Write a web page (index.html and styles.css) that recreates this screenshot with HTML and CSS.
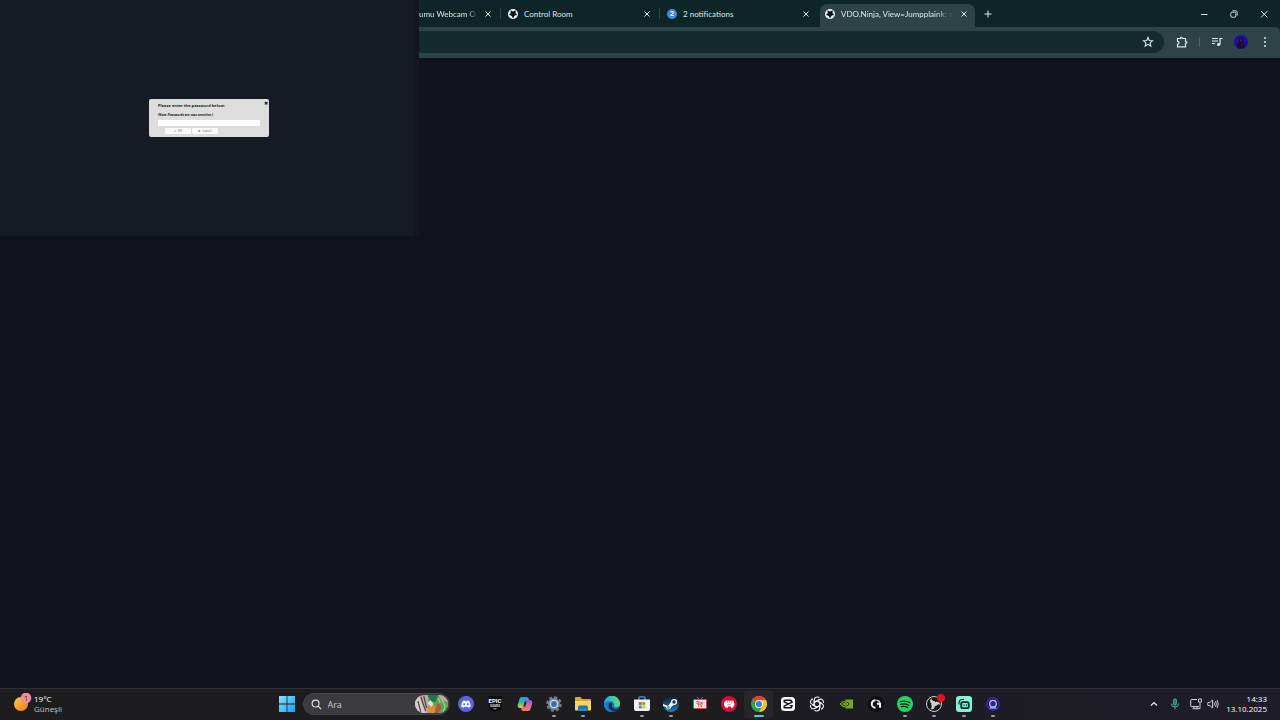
FILE: index.html
```html
<!DOCTYPE html>
<html lang="tr">
<head>
  <meta charset="UTF-8" />
  <meta name="viewport" content="width=device-width, initial-scale=1" />
  <title>VDO.Ninja, View=Jumpplaink</title>
  <link rel="stylesheet" href="styles.css">
</head>
<body>
  <svg class="sprite" aria-hidden="true">
    <symbol id="i-close" viewBox="0 0 10 10">
      <path d="M2.5 2.5l5 5M7.5 2.5l-5 5" stroke="currentColor" fill="none" />
    </symbol>
    <symbol id="i-ninja" viewBox="0 0 20 20">
      <circle cx="10" cy="10" r="10" fill="#f2f5f5" />
      <path d="M5 2.500L10 5 15.500 2.500 15 8 18.500 12 13.500 13 10 18.500 7.500 14 2 11.500 5.500 8z" fill="#0a1212" />
    </symbol>
  </svg>

  <!-- Ventana del navegador -->
  <header class="browser">
    <div class="tabs">
      <div class="tab tab-cut">
        <span class="tab-title">umu Webcam O</span>
        <button class="tab-close" aria-label="Kapat"><svg><use href="#i-close" /></svg></button>
      </div>
      <div class="tab">
        <svg class="favicon"><use href="#i-ninja" /></svg>
        <span class="tab-title">Control Room</span>
        <button class="tab-close" aria-label="Kapat"><svg><use href="#i-close" /></svg></button>
      </div>
      <div class="tab no-line">
        <span class="favicon badge-2">2</span>
        <span class="tab-title">2 notifications</span>
        <button class="tab-close" aria-label="Kapat"><svg><use href="#i-close" /></svg></button>
      </div>
      <div class="tab active">
        <svg class="favicon"><use href="#i-ninja" /></svg>
        <span class="tab-title">VDO.Ninja, View=Jumpplaink: a</span>
        <button class="tab-close" aria-label="Kapat"><svg><use href="#i-close" /></svg></button>
      </div>
      <button class="new-tab" aria-label="Yeni sekme">
        <svg viewBox="0 0 10 10"><path d="M5 1.500v7M1.500 5h7" stroke="currentColor" fill="none" /></svg>
      </button>
      <div class="window-controls">
        <button aria-label="Simge durumuna küçült">
          <svg viewBox="0 0 10 10"><path d="M2 5.500h6.500" stroke="currentColor" fill="none" /></svg>
        </button>
        <button aria-label="Önceki boyut">
          <svg viewBox="0 0 10 10"><g stroke="currentColor" stroke-width=".9" fill="none"><rect x="1.800" y="3.200" width="5" height="5" rx="1.200" /><path d="M3.500 1.800h3.200q1.500 0 1.500 1.500v3.200" /></g></svg>
        </button>
        <button aria-label="Kapat">
          <svg viewBox="0 0 10 10"><path d="M2 2l6.500 6.500M8.500 2L2 8.500" stroke="currentColor" fill="none" /></svg>
        </button>
      </div>
    </div>

    <div class="toolbar">
      <div class="address">
        <button class="star" aria-label="Yer işareti ekle">
          <svg viewBox="0 0 12 12"><path d="M6 1.500l1.300 3 3.200.3-2.400 2.100.7 3.200L6 8.400l-2.800 1.700.7-3.200L1.500 4.800l3.200-.3z" stroke="currentColor" stroke-width="1.100" fill="none" /></svg>
        </button>
      </div>
      <button class="extensions" aria-label="Uzantılar">
        <svg viewBox="0 0 12 12"><path d="M1.500 2.500h3c-.2-1.600 2-1.600 1.800 0h3.200v3c1.800-.2 1.800 2.100 0 1.900v3.400h-8V8.300c2-.3 2-2.800 0-3z" stroke="currentColor" stroke-width="1.200" fill="none" /></svg>
      </button>
      <span class="divider"></span>
      <button class="media" aria-label="Medya">
        <svg viewBox="0 0 12 12"><path d="M1 2.500h6M1 5h6M1 7.500h3M9 8.500V2.500h2.500" stroke="currentColor" stroke-width="1.200" fill="none" /><circle cx="7.600" cy="8.500" r="1.600" fill="currentColor" /></svg>
      </button>
      <button class="profile" aria-label="Profil">
        <svg viewBox="0 0 14 14"><circle cx="7" cy="7" r="7" fill="#1b0f9c" /><path d="M7 2.500c2 0 2.500 2.500 1.800 4l2 3.500-1.500 3.500H4.500L3.200 10.500l2-4C4.500 4.500 5 2.500 7 2.500z" fill="#170c26" /><path d="M6 4.500h2v2H6zM7.500 8l1.300 2-1.800 1z" fill="#56203a" /></svg>
      </button>
      <button class="menu" aria-label="Menü">
        <svg viewBox="0 0 12 12" fill="currentColor"><circle cx="6" cy="2" r="1" /><circle cx="6" cy="6" r="1" /><circle cx="6" cy="10" r="1" /></svg>
      </button>
    </div>
  </header>

  <main class="page"></main>

  <!-- Vista previa con el aviso de contraseña -->
  <section class="preview">
    <form class="prompt">
      <button type="button" class="prompt-close" aria-label="Close">✖</button>
      <label class="prompt-title" for="password">Please enter the password below:</label>
      <p class="prompt-note">(Note: Passwords are case sensitive.)</p>
      <input id="password" type="password">
      <div class="prompt-actions">
        <button type="button"><span class="ok">✔</span> OK</button>
        <button type="button"><span class="cancel">✖</span> Cancel</button>
      </div>
    </form>
  </section>

  <!-- Barra de tareas -->
  <footer class="taskbar">
    <div class="weather">
      <svg class="weather-icon" viewBox="0 0 18 18">
        <defs><linearGradient id="sun" x1="0" y1="0" x2="1" y2="1"><stop offset="0" stop-color="#ffc84a" /><stop offset="1" stop-color="#ee7a1c" /></linearGradient></defs>
        <circle cx="7" cy="11" r="7" fill="url(#sun)" />
        <circle cx="12" cy="5" r="5.300" fill="#f08b9c" />
        <text x="12" y="8" text-anchor="middle">1</text>
      </svg>
      <div class="weather-text">
        <span class="temp">19°C</span>
        <span>Güneşli</span>
      </div>
    </div>

    <div class="center">
      <button class="start" aria-label="Başlat">
        <svg viewBox="0 0 16 16">
          <defs><linearGradient id="win" x1="0" y1="0" x2="1" y2="1"><stop offset="0" stop-color="#8be0fa" /><stop offset="1" stop-color="#18a4ee" /></linearGradient></defs>
          <path d="M0 0h7.600v7.600H0zM8.400 0H16v7.600H8.400zM0 8.400h7.600V16H0zM8.400 8.400H16V16H8.400z" fill="url(#win)" />
        </svg>
      </button>
      <div class="search">
        <svg class="lens" viewBox="0 0 12 12"><circle cx="5" cy="5" r="3.800" stroke="#e3e3e5" stroke-width="1.200" fill="none" /><path d="M7.800 7.800L11 11" stroke="#e3e3e5" stroke-width="1.300" /></svg>
        <input type="text" placeholder="Ara" aria-label="Ara">
        <svg class="art" viewBox="0 0 34 18" preserveAspectRatio="none">
          <defs><clipPath id="artclip"><rect width="34" height="18" rx="9" /></clipPath></defs>
          <g clip-path="url(#artclip)">
            <rect width="34" height="18" fill="#b8a9a4" />
            <path d="M4 0l7 18H0V5z" fill="#d9cbc9" />
            <path d="M6 2l5 14M9 1l3 12M3 6l3 11" stroke="#574b51" stroke-width="1.300" />
            <path d="M13 0h21v18H22l-3-8-5-3z" fill="#5ca35d" />
            <path d="M13 0h11l-3 7-5-1z" fill="#286f4d" />
            <path d="M24 0h10v7l-7-2z" fill="#c8a4a5" />
            <path d="M17 8l4 3-1 7h-6l-1-6z" fill="#e08a3c" />
            <path d="M13 8l3-3 3 4-2 3z" fill="#d9e3d0" />
            <path d="M23 8l3 1 1 5-4 4h-3l2-6z" fill="#bc5439" />
            <path d="M28 5l3 6-2 6M24 3l2 5" stroke="#9bd77b" stroke-width="1.200" fill="none" />
          </g>
        </svg>
      </div>

      <nav class="apps">
        <button aria-label="Discord">
          <svg viewBox="0 0 16 16"><circle cx="8" cy="8" r="8" fill="#5865e8" /><path d="M3.300 10.800c0-2.500.6-4.300 1.500-5.800l2-.6.5.8h1.400l.5-.8 2 .6c.9 1.500 1.500 3.300 1.500 5.800l-2.300 1-.7-1H6.300l-.7 1z" fill="#fff" /><circle cx="6.200" cy="8.300" r="1" fill="#5865e8" /><circle cx="9.800" cy="8.300" r="1" fill="#5865e8" /></svg>
        </button>
        <button aria-label="Epic Games">
          <svg viewBox="0 0 16 16"><path d="M1.500 0h13v13L8 16l-6.500-3z" fill="#0b0b0c" /><text class="epic" x="8" y="7" text-anchor="middle">EPIC</text><text class="games" x="8" y="10.500" text-anchor="middle">GAMES</text><path d="M5.500 12.500h5L8 13.600z" fill="#ddd" /></svg>
        </button>
        <button aria-label="Copilot">
          <svg viewBox="0 0 16 16">
            <defs>
              <linearGradient id="cop1" x1="0" y1="0" x2="0" y2="1"><stop offset="0" stop-color="#2d8df0" /><stop offset=".5" stop-color="#43b99a" /><stop offset="1" stop-color="#f2c33a" /></linearGradient>
              <linearGradient id="cop2" x1="0" y1="0" x2="0" y2="1"><stop offset="0" stop-color="#7b62ef" /><stop offset=".5" stop-color="#e460ab" /><stop offset="1" stop-color="#f3834c" /></linearGradient>
            </defs>
            <path d="M4.500 1h5.300q1.400 0 1.800 1.500l.5 1.800H10L7.500 12H3.300Q.2 12 .8 8.500L2.500 3Q3 1 4.500 1z" fill="url(#cop1)" />
            <path d="M11.500 15H6.200q-1.400 0-1.800-1.500L4 11.700h2L8.500 4h4.200q3.100 0 2.500 3.500L13.500 13q-.5 2-2 2z" fill="url(#cop2)" />
            <path d="M7.600 5.500h1.900L8.400 10.500H6.300z" fill="#26222f" />
          </svg>
        </button>
        <button class="running" aria-label="Ayarlar">
          <svg viewBox="0 0 16 16"><circle cx="8" cy="8" r="6.700" fill="none" stroke="#767b84" stroke-width="2.200" stroke-dasharray="3.200 2.060" /><circle cx="8" cy="8" r="4.900" fill="#888d96" stroke="#858a93" stroke-width="2" /><circle cx="8" cy="8" r="4" fill="#d5dde6" /><circle cx="8" cy="8" r="2.900" fill="#2b72bd" /></svg>
        </button>
        <button class="running" aria-label="Dosya Gezgini">
          <svg viewBox="0 0 16 16"><path d="M0 2q0-1 1-1h4.500L7 3h8q1 0 1 1v10H0z" fill="#e0a52b" /><path d="M0 5h16v8.500q0 1-1 1H1q-1 0-1-1z" fill="#fbd366" /><path d="M3 15v-4q0-1.500 1.500-1.500h7q1.500 0 1.500 1.500v4h-2.500v-2h-5v2z" fill="#1a78bd" /><path d="M5.500 13h5v2h-5z" fill="#2a91d1" /></svg>
        </button>
        <button aria-label="Edge">
          <svg viewBox="0 0 16 16">
            <defs><linearGradient id="edge" x1="0" y1="0" x2="1" y2="0"><stop offset="0" stop-color="#26a5e6" /><stop offset="1" stop-color="#5be06a" /></linearGradient></defs>
            <circle cx="8" cy="8" r="8" fill="#126ac0" />
            <path d="M0 8a8 8 0 0 1 16-.5c.2 3-2.600 4.300-5 3.700-1.600-.4-1.400-1.200-1-2C10.600 7.300 9 5.200 6 5.200 3 5.200 1 6 0 8z" fill="url(#edge)" />
            <path d="M5.400 7.500c-2 3.300.6 7.300 4.700 7.300 2 0 3.700-.8 4.700-2.100C11 14.500 7 12 8 8.700 8 7 6.500 6.500 5.400 7.500z" fill="#1c2838" />
            <path d="M6.500 5.300C2 6.300 2.500 13 7.500 16 3 16 0 12.500 0 8c1.500-3 4-3 6.500-2.700z" fill="#1c7fd0" />
          </svg>
        </button>
        <button class="running" aria-label="Microsoft Store">
          <svg viewBox="0 0 16 16"><path d="M5 4V1.800q0-1 1-1h4q1 0 1 1V4" stroke="#37a3e0" stroke-width="1.300" fill="none" /><path d="M0 3.500h16V13q0 2-2 2H2q-2 0-2-2z" fill="#f1f2f4" /><path d="M4.800 6h2.900v2.900H4.800z" fill="#e8512f" /><path d="M8.300 6h2.900v2.900H8.300z" fill="#76b52c" /><path d="M4.800 9.500h2.900v2.900H4.800z" fill="#2196d9" /><path d="M8.300 9.500h2.900v2.900H8.300z" fill="#f5b921" /></svg>
        </button>
        <button class="running" aria-label="Steam">
          <svg viewBox="0 0 16 16">
            <defs><linearGradient id="steam" x1="0" y1="0" x2="0" y2="1"><stop offset="0" stop-color="#131b34" /><stop offset="1" stop-color="#1a7db8" /></linearGradient></defs>
            <circle cx="8" cy="8" r="8" fill="url(#steam)" /><path d="M0 8l5 2L8 6l2-3 4 1-1 4-4 2-2 3-3 .500-1-2.500-3-1z" fill="#f0f3f6" /><circle cx="11" cy="6" r="3" fill="#f0f3f6" /><circle cx="11" cy="6" r="1.700" fill="#202b46" /><circle cx="5.400" cy="11.600" r="1.500" fill="#7f96ab" />
          </svg>
        </button>
        <button aria-label="Dizi">
          <svg viewBox="0 0 16 16"><path d="M5 1l3 3 3-3" stroke="#c75149" fill="none" /><rect x="1.500" y="3.500" width="13" height="9" rx="1" fill="#f3e9e4" stroke="#cf4a41" /><text class="tv" x="8" y="8" text-anchor="middle">Dizi</text><text class="tv" x="8" y="11.400" text-anchor="middle">TV</text></svg>
        </button>
        <button aria-label="Bigo">
          <svg viewBox="0 0 16 16"><circle cx="8" cy="8" r="8" fill="#d80c30" /><path d="M3 6.500L5 4.500l7.500.3 1 3.700-1.500 3-2 .5-.5-1.500H7V12l-2.500-.5L3 9z" fill="#fff" /><path d="M6.500 4.500v2.500M8.700 4.500v2.500M10.800 5v2.500M6 8.300h4" stroke="#d80c30" stroke-width=".5" /></svg>
        </button>
        <button class="running current" aria-label="Chrome">
          <svg viewBox="0 0 16 16"><circle cx="8" cy="8" r="8" fill="#2da44e" /><path d="M8 8L1.100 4A8 8 0 0 1 14.900 4z" fill="#e5412f" /><path d="M8 4h6.900A8 8 0 0 1 8 16l3.500-6z" fill="#fbc417" /><circle cx="8" cy="8" r="4" fill="#fff" /><circle cx="8" cy="8" r="3.100" fill="#3a7fe8" /></svg>
        </button>
        <button aria-label="CapCut">
          <svg viewBox="0 0 16 16"><rect x="1" y="1" width="14" height="14" rx="3.500" fill="#fafafa" /><path d="M11.500 6V5q0-.8-.8-.8H5q-.9 0-.9.800v.8l8.700 4.300M11.500 10v1q0 .8-.8.800H5q-.9 0-.9-.8v-.8l8.700-4.300" stroke="#111" stroke-width="1.500" fill="none" /></svg>
        </button>
        <button aria-label="ChatGPT">
          <svg viewBox="0 0 16 16">
            <g stroke="#ececef" stroke-width="1.100" fill="none">
              <path id="petal" d="M5.300 9.500V4q0-3 2.900-3 1.400 0 2.200.9M5.300 6.200l4.800-2.800" />
              <use href="#petal" transform="rotate(60 8 8)" />
              <use href="#petal" transform="rotate(120 8 8)" />
              <use href="#petal" transform="rotate(180 8 8)" />
              <use href="#petal" transform="rotate(240 8 8)" />
              <use href="#petal" transform="rotate(300 8 8)" />
            </g>
          </svg>
        </button>
        <button aria-label="NVIDIA">
          <svg viewBox="0 0 16 16"><path d="M6.500 3.500H14v9H6.500z" fill="#76a81c" /><path d="M1.500 8q5-6 10 0-5 6-10 0z" fill="#1c2310" stroke="#76a81c" stroke-width="1.200" /><path d="M4 8q2.500-3 5 0-2.500 2.800-5 0z" stroke="#8fc527" fill="#587f14" /></svg>
        </button>
        <button aria-label="Logitech G HUB">
          <svg viewBox="0 0 16 16"><circle cx="8" cy="8" r="8" fill="#0d0d10" /><path d="M7.500 4.200a3.700 3.700 0 0 0 0 7.500M9 7.800h3.100v4" stroke="#f6f6f6" stroke-width="2" fill="none" /><path d="M8.500 4.200q2.900.3 3.600 2.500" stroke="#f6f6f6" stroke-width="1.300" fill="none" /></svg>
        </button>
        <button class="running" aria-label="Spotify">
          <svg viewBox="0 0 16 16"><circle cx="8" cy="8" r="8" fill="#1ed760" /><path d="M3.300 5.700q5-1.500 9.500 1M3.700 8.300q4.200-1.200 8 .9M4.200 10.700q3.600-.9 6.600.8" stroke="#121a16" stroke-width="1.300" stroke-linecap="round" fill="none" /></svg>
        </button>
        <button class="running" aria-label="OBS Studio">
          <svg viewBox="0 0 16 16"><circle cx="8" cy="8" r="7.500" fill="#171619" stroke="#d0d0d3" /><g fill="#cfced2"><path id="blade" d="M8 8.500C4 8 3 4.500 5.500 2c-.2 2 1 3 3.500 3.200q1 2-1 3.300z" /><use href="#blade" transform="rotate(120 8 8)" /><use href="#blade" transform="rotate(240 8 8)" /></g></svg>
          <span class="rec-dot"></span>
        </button>
        <button class="running" aria-label="Streamlabs">
          <svg viewBox="0 0 16 16"><rect width="16" height="16" rx="3" fill="#80f5d2" /><rect x="5.200" y="6.200" width="7.600" height="6" rx="1.800" fill="#80f5d2" stroke="#0d2a2a" stroke-width="1.800" /><path d="M3 8.500V7q0-3.500 3.500-3.500H8" stroke="#0d2a2a" stroke-width="1.200" fill="none" /><path d="M8 8.300v1.700M10.500 8.300v1.700" stroke="#0d2a2a" /></svg>
        </button>
        <button class="running" aria-label="Kamera">
          <svg viewBox="0 0 16 16"><circle cx="8" cy="8" r="7" fill="#3524ad" /><circle cx="8" cy="8" r="5.200" fill="#191747" /><circle cx="8" cy="7.700" r="3.300" stroke="#b9c8f4" stroke-width="1.300" fill="#292775" /><path d="M4.500 12h7" stroke="#b9c8f4" stroke-width="1.200" /></svg>
        </button>
      </nav>
    </div>

    <div class="tray">
      <button aria-label="Gizli simgeler"><svg viewBox="0 0 12 12"><path d="M3 7.500l3-3 3 3" stroke="#eee" stroke-width="1.200" fill="none" /></svg></button>
      <button aria-label="Mikrofon"><svg viewBox="0 0 12 12"><rect x="4.500" y=".8" width="3" height="6.400" rx="1.500" fill="#277c70" stroke="#3fb8a4" stroke-width=".8" /><path d="M2.300 5.500q.2 3.500 3.700 3.500t3.700-3.500M6 9v2.300" stroke="#3fb8a4" fill="none" /></svg></button>
      <button class="network" aria-label="Ağ"><svg viewBox="0 0 12 12"><path d="M7 1.500H1.500q-.8 0-.8.800v5.500q0 .8.800.8H9M4 8.600v2M2.500 10.700h6M7 8.600v2" stroke="#d7d7dc" fill="none" /><path d="M8.500 1h3v3h-3zM10 4v6.600H8" stroke="#d7d7dc" stroke-width=".9" fill="none" /></svg></button>
      <button aria-label="Ses"><svg viewBox="0 0 12 12"><path d="M.8 4.500h2L5.500 2v8L2.800 7.500h-2zM7 4.500q1 1.500 0 3M8.500 3.200q2 2.800 0 5.600M10 2q2.800 4 0 8" stroke="#d7d7dc" stroke-width=".9" fill="none" /></svg></button>
      <div class="clock">
        <span>14:33</span>
        <span>13.10.2025</span>
      </div>
    </div>
  </footer>
</body>
</html>
```
FILE: styles.css
```css
* {
  box-sizing: border-box;
}

body {
  margin: 0;
  min-height: 100vh;
  display: flex;
  flex-direction: column;
  position: relative;
  background: #10121d;
  font-family: "Open Sans", "Segoe UI", sans-serif;
  font-size: 8px;
  color: #dfe8e8;
}

button {
  margin: 0;
  padding: 0;
  border: none;
  background: none;
  color: inherit;
  font: inherit;
  cursor: pointer;
}

svg {
  display: block;
}

.sprite {
  position: absolute;
  width: 0;
  height: 0;
}

/* Navegador */
.browser {
  background: #0c2526;
}

.tabs {
  display: flex;
  align-items: stretch;
  height: 27px;
  padding: 4px 0 0 419px;
}

.tab {
  position: relative;
  display: flex;
  align-items: center;
  gap: 6px;
  flex: 0 1 159px;
  min-width: 0;
  padding: 0 8px 4px 7px;
  border-radius: 7px 7px 0 0;
}

.tab-cut {
  flex-basis: 82px;
  padding-left: 0;
}

/* Separador entre pestañas */
.tab:not(.active):not(.no-line)::after {
  content: "";
  position: absolute;
  right: 0;
  top: 4px;
  width: 1px;
  height: 11px;
  background: #2b4447;
}

.tab.active {
  flex-basis: 155px;
  margin-left: 1px;
  padding-left: 5px;
  padding-right: 6px;
  background: #2c4347;
}

.favicon {
  flex: none;
  width: 10px;
  height: 10px;
}

.badge-2 {
  border-radius: 50%;
  background: #3a8be0;
  color: #fff;
  font-size: 7px;
  line-height: 10px;
  font-weight: bold;
  text-align: center;
}

.tab-title {
  flex: 1;
  min-width: 0;
  overflow: hidden;
  white-space: nowrap;
  font-family: Lato, "Segoe UI", sans-serif;
  font-size: 8px;
  line-height: 12px;
}

.tab-cut .tab-title,
.active .tab-title {
  -webkit-mask-image: linear-gradient(to right, #000 85%, transparent);
  mask-image: linear-gradient(to right, #000 85%, transparent);
}

.tab-close svg,
.new-tab svg,
.window-controls svg {
  width: 10px;
  height: 10px;
}

.new-tab {
  padding: 0 8px 4px;
}

.window-controls {
  display: flex;
  gap: 20px;
  margin-left: auto;
  padding: 0 11px 4px 0;
}

.toolbar {
  display: flex;
  align-items: center;
  height: 31px;
  padding: 0 9px 1px 419px;
  background: #2c4347;
  border-radius: 0 5px 0 0;
}

.toolbar svg {
  width: 12px;
  height: 12px;
}

.address {
  flex: 1;
  display: flex;
  justify-content: flex-end;
  align-items: center;
  height: 22px;
  padding-right: 10px;
  border-radius: 0 11px 11px 0;
  background: #132b2d;
}

.extensions {
  margin-left: 12px;
}

.divider {
  width: 1px;
  height: 10px;
  margin: 0 11px;
  background: #4b6568;
}

.profile {
  margin: 0 11px;
}

.toolbar .profile svg {
  width: 14px;
  height: 14px;
}

.page {
  flex: 1;
}

/* Vista previa sobre el navegador */
.preview {
  position: absolute;
  top: 0;
  left: 0;
  width: 419px;
  height: 236px;
  display: flex;
  align-items: center;
  justify-content: center;
  background: #151a25;
  border-right: 5px solid #131621;
  padding-left: 4px;
}

.prompt {
  position: relative;
  display: flex;
  flex-direction: column;
  width: 120px;
  padding: 4px 9px 3px;
  border-radius: 2px;
  background: #dcdddc;
  color: #222;
  line-height: 6px;
}

.prompt-title {
  font-size: 4px;
  font-weight: bold;
}

.prompt-note {
  margin: 3px 0 2px;
  font-size: 3px;
  font-weight: bold;
  color: #111;
}

.prompt input {
  width: 100%;
  height: 6px;
  padding: 0 1px;
  border: none;
  background: #fff;
  font-size: 4px;
}

.prompt-actions {
  display: flex;
  gap: 1px;
  margin: 2px 0 0 7px;
}

.prompt-actions button {
  width: 26px;
  height: 6px;
  border-radius: 1px;
  background: #fafafa;
  color: #555;
  font-size: 3px;
  line-height: 6px;
}

.ok {
  color: #7b9b83;
}

.cancel {
  color: #c0455a;
}

.prompt-close {
  position: absolute;
  top: 1px;
  right: 1px;
  font-size: 5px;
  line-height: 6px;
}

/* Barra de tareas */
.taskbar {
  display: grid;
  grid-template-columns: 1fr auto 1fr;
  align-items: center;
  height: 32px;
  padding-bottom: 1px;
  border-top: 1px solid #2d2f3a;
  background: linear-gradient(to right, #1d1d1f, #1d1c20 50%, #1e1c28);
  color: #fff;
}

.weather {
  display: flex;
  align-items: center;
  gap: 2px;
  padding-left: 14px;
}

.weather-icon {
  width: 18px;
  height: 18px;
  margin-bottom: 4px;
}

.weather-icon text {
  font-size: 8px;
  fill: #4a1f2b;
}

.weather-text,
.clock {
  display: flex;
  flex-direction: column;
  line-height: 10px;
  padding-bottom: 1px;
}

.weather-text {
  color: #c4c4c7;
}

.temp {
  color: #fff;
}

.center {
  display: flex;
  align-items: center;
  gap: 2px;
}

.start {
  display: flex;
  justify-content: center;
  width: 28px;
}

.start svg {
  width: 16px;
  height: 16px;
}

.search {
  display: flex;
  align-items: center;
  gap: 6px;
  width: 147px;
  height: 22px;
  padding: 0 1px 0 7px;
  border-radius: 11px;
  border: 1px solid #454549;
  background: #3b3b3f;
}

.lens {
  flex: none;
  width: 11px;
  height: 11px;
}

.search input {
  flex: 1;
  min-width: 0;
  padding: 0;
  border: none;
  outline: none;
  background: none;
  color: #d5d5d8;
  font-family: inherit;
  font-size: 9px;
}

.search input::placeholder {
  color: #c9c9cd;
}

.art {
  flex: none;
  width: 33px;
  height: 18px;
}

.apps {
  display: grid;
  grid-template-columns: repeat(19, 1fr);
  width: 556px;
}

.apps button {
  position: relative;
  display: flex;
  align-items: center;
  justify-content: center;
  height: 28px;
}

.apps svg {
  width: 16px;
  height: 16px;
}

.apps text {
  font-family: "Roboto", sans-serif;
  font-weight: bold;
}

.epic {
  font-size: 6px;
  fill: #fff;
}

.games {
  font-size: 3px;
  fill: #ddd;
}

.tv {
  font-size: 4px;
  fill: #c13a35;
}

/* Indicador de aplicación abierta */
.running::after {
  content: "";
  position: absolute;
  bottom: 1px;
  left: 50%;
  width: 4px;
  height: 2px;
  margin-left: -2px;
  border-radius: 1px;
  background: #9a9a9f;
}

.apps .current {
  border-radius: 3px;
  background: #26262b;
}

.current::after {
  width: 10px;
  margin-left: -5px;
  background: #4ccbe0;
}

.rec-dot {
  position: absolute;
  top: 4px;
  right: 4px;
  width: 8px;
  height: 8px;
  border-radius: 50%;
  background: #e8121c;
}

.tray {
  display: flex;
  align-items: center;
  justify-content: flex-end;
  gap: 5px;
  padding-right: 13px;
}

.tray svg {
  width: 12px;
  height: 12px;
}

.tray button:first-child {
  margin-right: 4px;
}

.tray .network {
  margin-left: 4px;
}

.clock {
  margin-left: 2px;
  text-align: right;
}
```
